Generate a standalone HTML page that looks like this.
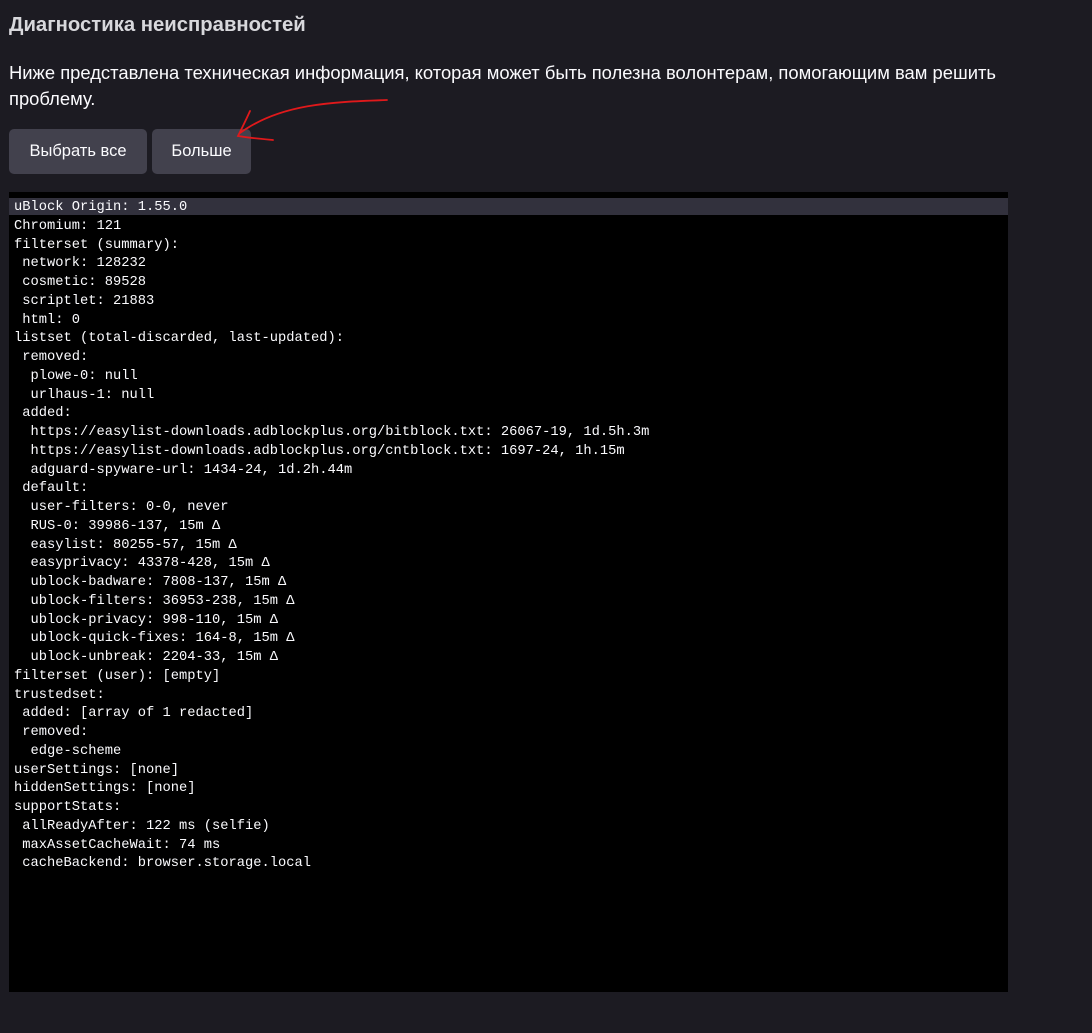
<!DOCTYPE html>
<html><head><meta charset="utf-8"><style>
body{margin:0;background:#1c1b22;width:1092px;height:1033px;overflow:hidden;font-family:"Liberation Sans",sans-serif;color:#fbfbfe;position:relative}
h2{position:absolute;left:9px;top:14px;margin:0;font-size:20.3px;font-weight:bold;color:#d8d8dc}
p{position:absolute;left:9px;top:60px;margin:0;font-size:18.4px;line-height:26px;width:1020px;color:#fbfbfe}
.btn{position:absolute;top:129px;height:45px;background:#42414d;border-radius:5px;font-size:16.5px;line-height:45px;text-align:center;color:#fbfbfe}
.ta{position:absolute;left:9px;top:192px;width:999px;height:800px;background:#000}
pre{margin:0;position:absolute;left:5px;top:7px;font-family:"Liberation Mono",monospace;font-size:13.75px;line-height:18.75px;color:#fbfbfe}
.hl{position:absolute;left:0;top:6px;width:999px;height:17px;background:#32313d}
</style></head><body>
<h2>Диагностика неисправностей</h2>
<p>Ниже представлена техническая информация, которая может быть полезна волонтерам, помогающим вам решить проблему.</p>
<div class="btn" style="left:9px;width:138px">Выбрать все</div>
<div class="btn" style="left:152px;width:99px">Больше</div>
<svg style="position:absolute;left:0;top:0" width="400" height="160"><path d="M387 100 C330 102 280 104 240 133 M250 111 C246 120 242 128 238 136 C250 138 262 139 273 140" fill="none" stroke="#e0191b" stroke-width="1.8" stroke-linecap="round"/></svg>
<div class="ta"><div class="hl"></div><pre>uBlock Origin: 1.55.0
Chromium: 121
filterset (summary):
 network: 128232
 cosmetic: 89528
 scriptlet: 21883
 html: 0
listset (total-discarded, last-updated):
 removed:
  plowe-0: null
  urlhaus-1: null
 added:
  https://easylist-downloads.adblockplus.org/bitblock.txt: 26067-19, 1d.5h.3m
  https://easylist-downloads.adblockplus.org/cntblock.txt: 1697-24, 1h.15m
  adguard-spyware-url: 1434-24, 1d.2h.44m
 default:
  user-filters: 0-0, never
  RUS-0: 39986-137, 15m Δ
  easylist: 80255-57, 15m Δ
  easyprivacy: 43378-428, 15m Δ
  ublock-badware: 7808-137, 15m Δ
  ublock-filters: 36953-238, 15m Δ
  ublock-privacy: 998-110, 15m Δ
  ublock-quick-fixes: 164-8, 15m Δ
  ublock-unbreak: 2204-33, 15m Δ
filterset (user): [empty]
trustedset:
 added: [array of 1 redacted]
 removed:
  edge-scheme
userSettings: [none]
hiddenSettings: [none]
supportStats:
 allReadyAfter: 122 ms (selfie)
 maxAssetCacheWait: 74 ms
 cacheBackend: browser.storage.local</pre></div>
</body></html>
